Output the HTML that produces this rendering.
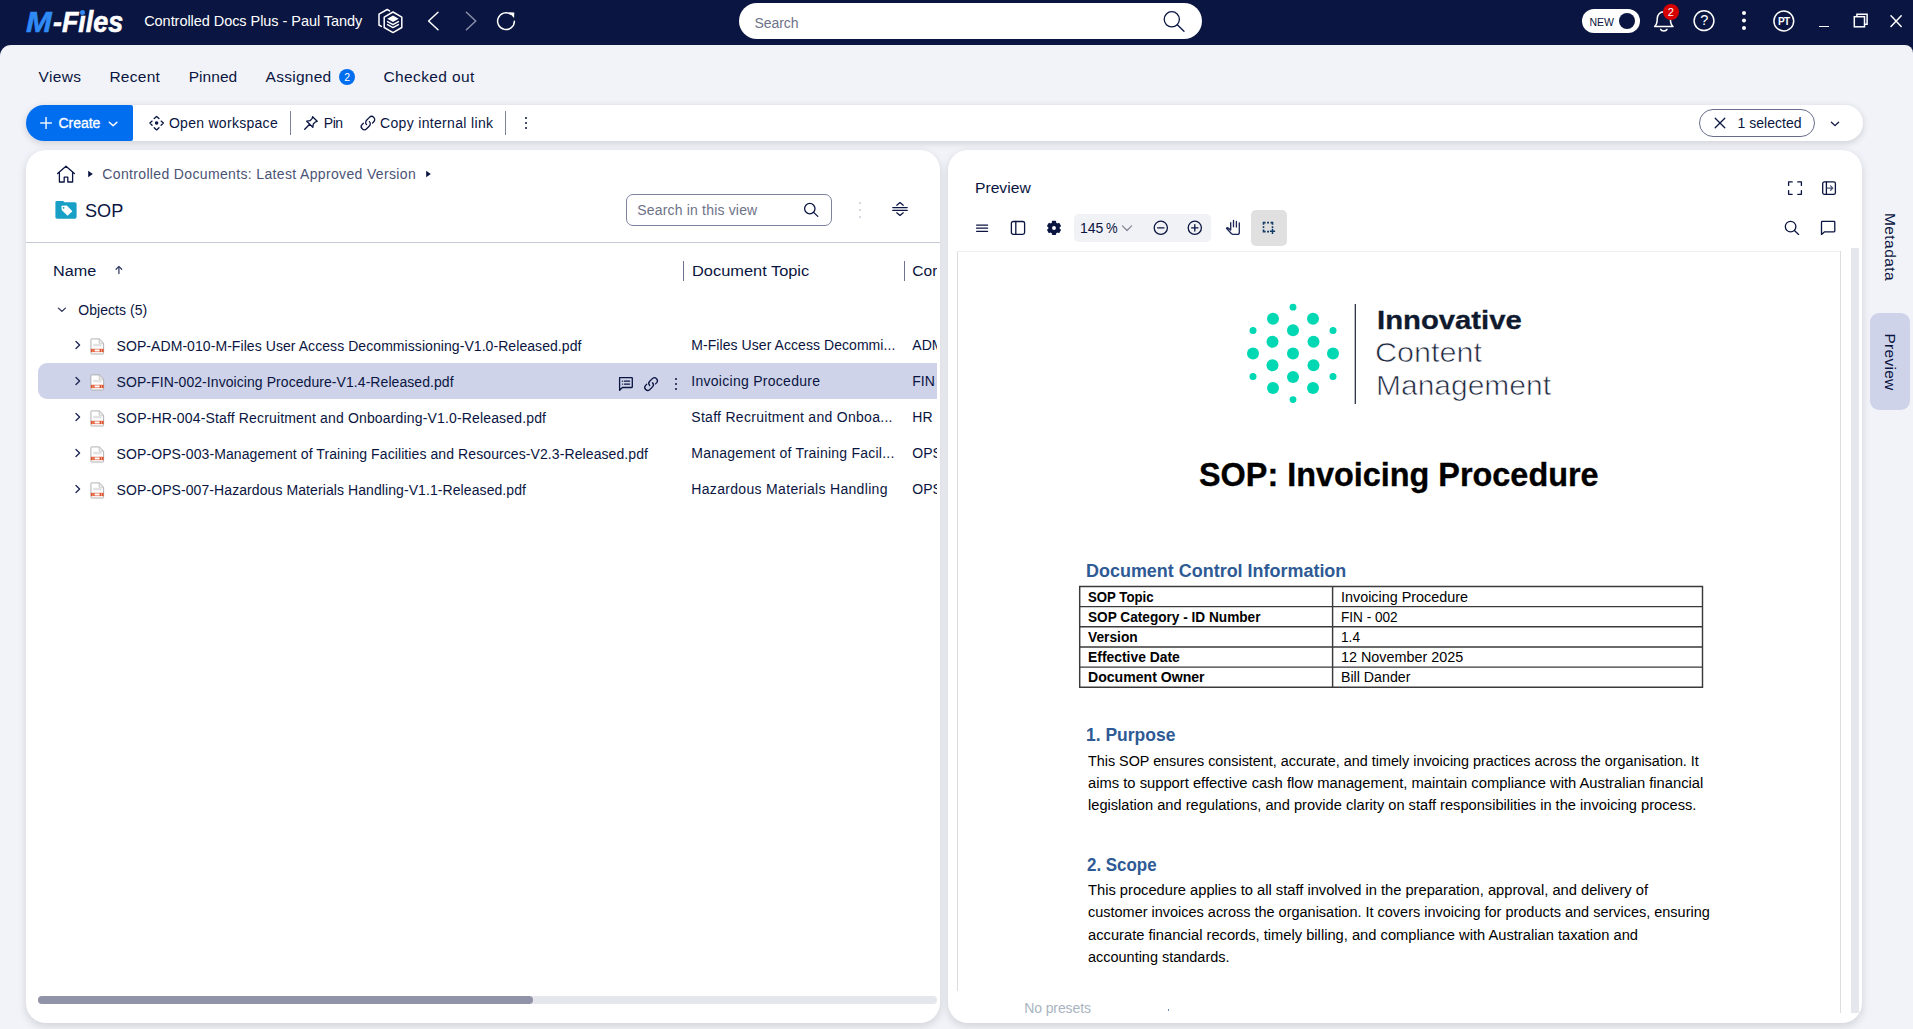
<!DOCTYPE html>
<html><head><meta charset="utf-8"><title>M-Files</title>
<style>
*{box-sizing:border-box;margin:0;padding:0}
html,body{width:1913px;height:1029px;overflow:hidden;background:#0a1541;font-family:"Liberation Sans",sans-serif;color:#0a1541}
.a{position:absolute}
.t{position:absolute;white-space:pre;line-height:1;transform-origin:0 50%}
#content{left:0;top:45px;width:1913px;height:984px;background:#f2f3f8;border-radius:11px 8px 0 0}
.panel{background:#fff;border-radius:20px;box-shadow:0 3px 9px rgba(20,22,40,.15)}
svg{position:absolute;overflow:visible}
.ic{fill:none;stroke:#0a1541;stroke-width:1.3;stroke-linecap:round;stroke-linejoin:round}
.icw{fill:none;stroke:#fff;stroke-width:1.5;stroke-linecap:round;stroke-linejoin:round}
</style></head><body>
<!-- TOP BAR -->
<div class="a" id="content"></div>
<!-- vault icon -->
<svg style="left:376px;top:7px" width="30" height="28" viewBox="376 7 30 28">
<path class="icw" stroke-width="1.4" d="M381.4 26.4 L379 25 V14.2 L387.2 9.5 L389.6 10.9"/>
<path class="icw" stroke-width="1.5" d="M393 12 L401.8 17.1 V27.5 L393 32.6 L384.2 27.5 V17.1 Z"/>
<path fill="#fff" d="M393 15.6 L398.7 18.8 L393 22 L387.3 18.8 Z"/>
<path class="icw" stroke-width="1.3" d="M387.6 21.6 L393 24.6 L398.4 21.6 M387.6 24.6 L393 27.6 L398.4 24.6"/>
</svg>
<!-- back / fwd / refresh -->
<svg style="left:424px;top:9px" width="20" height="24" viewBox="0 0 20 24"><path class="icw" stroke-width="1.6" d="M14 3.2 L4.6 12 L14 20.8"/></svg>
<svg style="left:461px;top:9px" width="20" height="24" viewBox="0 0 20 24"><path class="icw" style="stroke:#8a8fa9" stroke-width="1.6" d="M5.4 3.2 L14.8 12 L5.4 20.8"/></svg>
<svg style="left:494px;top:9px" width="24" height="24" viewBox="0 0 24 24"><path class="icw" stroke-width="1.6" d="M20.4 12.2 A8.4 8.4 0 1 1 16.6 5.1"/><path fill="#fff" d="M14.6 3.2 L20.3 3.4 L20.1 9.1 Z"/></svg>
<!-- search box -->
<div class="a" style="left:739px;top:3px;width:463px;height:36px;border-radius:18px;background:#fff"></div>
<svg style="left:1161px;top:9px" width="26" height="26" viewBox="0 0 26 26"><circle class="ic" stroke-width="1.6" cx="10.8" cy="10.3" r="7.6"/><path class="ic" stroke-width="1.8" d="M16.3 15.8 L23 22.3"/></svg>
<!-- NEW toggle -->
<div class="a" style="left:1582px;top:9px;width:58px;height:24px;border-radius:12px;background:#fff"></div>
<div class="a" style="left:1619px;top:13px;width:16px;height:16px;border-radius:8px;background:#0a1541"></div>
<!-- bell -->
<svg style="left:1652px;top:9px" width="24" height="24" viewBox="0 0 24 24"><path class="icw" stroke-width="1.5" d="M2.6 17.6 C5 15.6 5.2 13 5.2 10 C5.2 5.6 8 2.8 11.8 2.8 C15.6 2.8 18.4 5.6 18.4 10 C18.4 13 18.6 15.6 21 17.6 Z"/><path class="icw" stroke-width="1.5" d="M8.6 20.4 C9.6 22.4 14 22.4 15 20.4"/></svg>
<div class="a" style="left:1662.8px;top:4.2px;width:16px;height:16px;border-radius:8px;background:#d60000"></div>
<!-- help -->
<svg style="left:1692px;top:9px" width="24" height="24" viewBox="1692 9 24 24"><circle class="icw" stroke-width="1.5" cx="1704" cy="20.7" r="9.9"/></svg>
<!-- kebab -->
<div class="a" style="left:1741.6px;top:11.4px;width:4px;height:4px;border-radius:2px;background:#fff;box-shadow:0 7.5px 0 #fff,0 15px 0 #fff"></div>
<!-- PT -->
<svg style="left:1772px;top:9px" width="24" height="24" viewBox="1772 9 24 24"><circle class="icw" stroke-width="1.5" cx="1783.8" cy="21" r="9.9"/></svg>
<!-- window controls -->
<div class="a" style="left:1819.2px;top:26.3px;width:10px;height:1.2px;background:#fff"></div>
<svg style="left:1852px;top:12px" width="18" height="18" viewBox="0 0 18 18"><rect class="icw" style="stroke-linejoin:miter" stroke-width="1.2" x="2.3" y="4.7" width="10.2" height="10.1"/><path class="icw" style="stroke-linejoin:miter;stroke-linecap:butt" stroke-width="1.2" d="M4.9 4.7 V2.3 H15.1 V12.3 H12.5"/></svg>
<svg style="left:1889px;top:14px" width="14" height="14" viewBox="0 0 14 14"><path class="icw" stroke-width="1.2" d="M2 1.8 L12.2 12.4 M12.2 1.8 L2 12.4"/></svg>

<!-- TABS badge -->
<div class="a" style="left:339px;top:69.3px;width:16px;height:16px;border-radius:8px;background:#006eef"></div>

<!-- TOOLBAR -->
<div class="a" style="left:26px;top:105px;width:1837px;height:36px;border-radius:18px;background:#fff;box-shadow:0 2px 7px rgba(20,22,40,.16)"></div>
<div class="a" style="left:26px;top:105px;width:107px;height:36px;border-radius:18px 2px 2px 18px;background:#006eef"></div>
<svg style="left:39px;top:116px" width="14" height="14" viewBox="0 0 14 14"><path class="icw" stroke-width="1.25" style="stroke-linecap:butt;opacity:.92" d="M7.05 1 V12.9 M1.2 7 H12.9"/></svg>
<svg style="left:107px;top:120px" width="12" height="8" viewBox="0 0 12 8"><path class="icw" stroke-width="1.2" d="M2.3 2.2 L6.1 5.8 L9.9 2.2"/></svg>
<!-- open workspace icon -->
<svg style="left:148px;top:115px" width="17" height="17" viewBox="0 0 17 17"><circle cx="8.6" cy="8.1" r="1.75" fill="#0a1541"/><path class="ic" stroke-width="1.4" d="M6.2 3.6 L8.6 1.4 L11 3.6 M6.2 12.7 L8.6 14.9 L11 12.7 M4.1 6.1 L1.9 8.1 L4.1 10.2 M13.1 6.1 L15.4 8.1 L13.1 10.2"/></svg>
<div class="a" style="left:290px;top:111px;width:1px;height:24px;background:#7d8299"></div>
<!-- pin icon -->
<svg style="left:302px;top:114px" width="17" height="18" viewBox="0 0 17 18"><path class="ic" stroke-width="1.2" d="M10.6 2.7 L15.2 7.3 L13.4 7.9 L11.3 10 L10.8 13.3 L4.7 7.2 L8 6.7 L10.1 4.6 Z M7.7 10.3 L2.7 15.2"/></svg>
<!-- link icon -->
<svg style="left:359px;top:114px" width="18" height="18" viewBox="0 0 18 18"><path class="ic" stroke-width="1.25" d="M7.6 10.6 A3.1 3.1 0 0 1 7.6 6.2 L10.4 3.4 A3.1 3.1 0 0 1 14.8 7.8 L13.6 9"/><path class="ic" stroke-width="1.25" d="M10.4 7.6 A3.1 3.1 0 0 1 10.4 12 L7.6 14.8 A3.1 3.1 0 0 1 3.2 10.4 L4.4 9.2"/></svg>
<div class="a" style="left:505px;top:111px;width:1px;height:24px;background:#7d8299"></div>
<div class="a" style="left:524.6px;top:116.6px;width:2.8px;height:2.8px;border-radius:2px;background:#0a1541;box-shadow:0 5px 0 #0a1541,0 10px 0 #0a1541"></div>
<!-- 1 selected pill -->
<div class="a" style="left:1699px;top:109px;width:116px;height:28px;border-radius:14px;border:1px solid #686d8c;background:#fff"></div>
<svg style="left:1713px;top:116px" width="14" height="14" viewBox="0 0 14 14"><path class="ic" stroke-width="1.15" d="M2.2 2.2 L11.8 11.8 M11.8 2.2 L2.2 11.8"/></svg>
<svg style="left:1829px;top:120px" width="12" height="8" viewBox="0 0 12 8"><path class="ic" stroke-width="1.3" d="M2.4 2.2 L6 5.6 L9.6 2.2"/></svg>
<!-- LEFT PANEL -->
<div class="a panel" style="left:26px;top:150px;width:914px;height:873px"></div>
<!-- home -->
<svg style="left:56px;top:164px" width="20" height="20" viewBox="0 0 20 20"><path class="ic" stroke-width="1.5" stroke-linejoin="miter" d="M1.6 9.6 L10 2.2 L18.4 9.6 M3.4 8.4 V18 H8.2 V13.2 H11.8 V18 H16.6 V8.4"/></svg>
<svg style="left:87px;top:170px" width="8" height="8" viewBox="0 0 8 8"><path fill="#0a1541" d="M1.2 0.8 L5.8 4 L1.2 7.2 Z"/></svg>
<svg style="left:425px;top:170px" width="8" height="8" viewBox="0 0 8 8"><path fill="#0a1541" d="M1.2 0.8 L5.8 4 L1.2 7.2 Z"/></svg>
<!-- SOP folder-tag icon -->
<svg style="left:55px;top:200px" width="22" height="20" viewBox="0 0 22 20"><path fill="#189fc6" d="M0.4 2.4 Q0.4 1 1.8 1 H8.2 L9.4 2.2 H20 Q21.6 2.2 21.6 3.8 V17 Q21.6 18.8 19.8 18.8 H2.2 Q0.4 18.8 0.4 17 Z"/><path fill="#fff" d="M6.4 5.8 L11.8 5.4 L17.4 11.2 L12.6 15.8 L6.8 10.2 Z"/><circle cx="8.6" cy="7.8" r="0.9" fill="#189fc6"/></svg>
<!-- search-in-view box -->
<div class="a" style="left:626px;top:194px;width:206px;height:32px;border-radius:7px;border:1px solid #7d829d;background:#fff"></div>
<svg style="left:802px;top:201px" width="18" height="18" viewBox="0 0 18 18"><circle class="ic" stroke-width="1.4" cx="7.8" cy="7.6" r="5.2"/><path class="ic" stroke-width="1.5" d="M11.6 11.4 L15.8 15.4"/></svg>
<div class="a" style="left:858.5px;top:201.7px;width:2.8px;height:2.8px;border-radius:2px;background:#c9ccd8;box-shadow:0 7px 0 #c9ccd8,0 14px 0 #c9ccd8"></div>
<!-- collapse icon -->
<svg style="left:891px;top:200px" width="18" height="18" viewBox="0 0 18 18"><path class="ic" stroke-width="1.4" d="M1.8 7.6 H16.2 M1.8 10.4 H16.2 M5.8 5.2 L9 2.6 L12.2 5.2 M5.8 12.8 L9 15.4 L12.2 12.8"/></svg>
<!-- divider -->
<div class="a" style="left:26px;top:241.5px;width:914px;height:1px;background:#c6c9d6"></div>
<!-- header separators / sort arrow -->
<svg style="left:113px;top:263px" width="12" height="13" viewBox="0 0 12 13"><path class="ic" style="stroke:#3a4268" stroke-width="1.2" d="M5.9 10.6 V3.6 M3.1 6.2 L5.9 3.4 L8.7 6.2"/></svg>
<div class="a" style="left:683px;top:261px;width:1px;height:20px;background:#6d7290"></div>
<div class="a" style="left:904px;top:261px;width:1px;height:20px;background:#6d7290"></div>
<!-- Objects chevron -->
<svg style="left:56px;top:305px" width="12" height="10" viewBox="0 0 12 10"><path class="ic" style="stroke:#2a3258" stroke-width="1.15" d="M2.4 3.1 L5.9 6.4 L9.4 3.1"/></svg>
<!-- selected row -->
<div class="a" style="left:38px;top:363px;width:899px;height:36px;background:#ced3ea;border-radius:9px 0 0 9px"></div>
<!-- row action icons -->
<svg style="left:617px;top:375px" width="18" height="18" viewBox="0 0 18 18"><path class="ic" stroke-width="1.15" d="M2.6 2.7 H14.8 Q15.3 2.7 15.3 3.2 V12 Q15.3 12.5 14.8 12.5 H5.4 L2.6 15.2 Z"/><path class="ic" stroke-width="1.05" d="M5.4 6.2 H5.5 M7.4 6.2 H12.6 M5.4 9.1 H5.5 M7.4 9.1 H12.6"/></svg>
<svg style="left:642px;top:375px" width="18" height="18" viewBox="0 0 18 18"><path class="ic" stroke-width="1.15" d="M7.7 10.5 A3 3 0 0 1 7.7 6.3 L10.6 3.4 A3 3 0 0 1 14.8 7.6 L13.5 8.9"/><path class="ic" stroke-width="1.15" d="M10.5 7.7 A3 3 0 0 1 10.5 11.9 L7.6 14.8 A3 3 0 0 1 3.4 10.6 L4.7 9.3"/></svg>
<div class="a" style="left:674.6px;top:377.5px;width:2.7px;height:2.7px;border-radius:2px;background:#0a1541;box-shadow:0 5px 0 #0a1541,0 10px 0 #0a1541"></div>
<svg style="left:74px;top:340.2px" width="8" height="10" viewBox="0 0 8 10"><path class="ic" style="stroke:#1c2553" stroke-width="1.1" d="M2 1.5 L5.6 5 L2 8.5"/></svg>
<svg style="left:89.5px;top:337.5px" width="15" height="17" viewBox="0 0 15 17"><path fill="#fff" stroke="#a9a9a9" stroke-width="0.9" d="M1.6 0.9 H9.2 L13.6 5.2 V15.2 Q13.6 16 12.8 16 H1.6 Q0.9 16 0.9 15.2 V1.7 Q0.9 0.9 1.6 0.9 Z"/><path fill="#f4f4f4" stroke="#b5b5b5" stroke-width="0.7" d="M9.2 0.9 V5.2 H13.6 Z"/><rect x="3.2" y="5.8" width="8.4" height="2.6" fill="#e3e3e3"/><rect x="0.9" y="10.8" width="12.7" height="3.3" fill="#e0522b"/><rect x="4.6" y="11.4" width="5" height="2.1" fill="#fff"/><rect x="2.6" y="10.8" width="0.7" height="3.3" fill="#f6b7a3"/><rect x="11.2" y="10.8" width="0.7" height="3.3" fill="#f6b7a3"/></svg>
<svg style="left:74px;top:376.2px" width="8" height="10" viewBox="0 0 8 10"><path class="ic" style="stroke:#1c2553" stroke-width="1.1" d="M2 1.5 L5.6 5 L2 8.5"/></svg>
<svg style="left:89.5px;top:373.5px" width="15" height="17" viewBox="0 0 15 17"><path fill="#fff" stroke="#a9a9a9" stroke-width="0.9" d="M1.6 0.9 H9.2 L13.6 5.2 V15.2 Q13.6 16 12.8 16 H1.6 Q0.9 16 0.9 15.2 V1.7 Q0.9 0.9 1.6 0.9 Z"/><path fill="#f4f4f4" stroke="#b5b5b5" stroke-width="0.7" d="M9.2 0.9 V5.2 H13.6 Z"/><rect x="3.2" y="5.8" width="8.4" height="2.6" fill="#e3e3e3"/><rect x="0.9" y="10.8" width="12.7" height="3.3" fill="#e0522b"/><rect x="4.6" y="11.4" width="5" height="2.1" fill="#fff"/><rect x="2.6" y="10.8" width="0.7" height="3.3" fill="#f6b7a3"/><rect x="11.2" y="10.8" width="0.7" height="3.3" fill="#f6b7a3"/></svg>
<svg style="left:74px;top:412.2px" width="8" height="10" viewBox="0 0 8 10"><path class="ic" style="stroke:#1c2553" stroke-width="1.1" d="M2 1.5 L5.6 5 L2 8.5"/></svg>
<svg style="left:89.5px;top:409.5px" width="15" height="17" viewBox="0 0 15 17"><path fill="#fff" stroke="#a9a9a9" stroke-width="0.9" d="M1.6 0.9 H9.2 L13.6 5.2 V15.2 Q13.6 16 12.8 16 H1.6 Q0.9 16 0.9 15.2 V1.7 Q0.9 0.9 1.6 0.9 Z"/><path fill="#f4f4f4" stroke="#b5b5b5" stroke-width="0.7" d="M9.2 0.9 V5.2 H13.6 Z"/><rect x="3.2" y="5.8" width="8.4" height="2.6" fill="#e3e3e3"/><rect x="0.9" y="10.8" width="12.7" height="3.3" fill="#e0522b"/><rect x="4.6" y="11.4" width="5" height="2.1" fill="#fff"/><rect x="2.6" y="10.8" width="0.7" height="3.3" fill="#f6b7a3"/><rect x="11.2" y="10.8" width="0.7" height="3.3" fill="#f6b7a3"/></svg>
<svg style="left:74px;top:448.2px" width="8" height="10" viewBox="0 0 8 10"><path class="ic" style="stroke:#1c2553" stroke-width="1.1" d="M2 1.5 L5.6 5 L2 8.5"/></svg>
<svg style="left:89.5px;top:445.5px" width="15" height="17" viewBox="0 0 15 17"><path fill="#fff" stroke="#a9a9a9" stroke-width="0.9" d="M1.6 0.9 H9.2 L13.6 5.2 V15.2 Q13.6 16 12.8 16 H1.6 Q0.9 16 0.9 15.2 V1.7 Q0.9 0.9 1.6 0.9 Z"/><path fill="#f4f4f4" stroke="#b5b5b5" stroke-width="0.7" d="M9.2 0.9 V5.2 H13.6 Z"/><rect x="3.2" y="5.8" width="8.4" height="2.6" fill="#e3e3e3"/><rect x="0.9" y="10.8" width="12.7" height="3.3" fill="#e0522b"/><rect x="4.6" y="11.4" width="5" height="2.1" fill="#fff"/><rect x="2.6" y="10.8" width="0.7" height="3.3" fill="#f6b7a3"/><rect x="11.2" y="10.8" width="0.7" height="3.3" fill="#f6b7a3"/></svg>
<svg style="left:74px;top:484.2px" width="8" height="10" viewBox="0 0 8 10"><path class="ic" style="stroke:#1c2553" stroke-width="1.1" d="M2 1.5 L5.6 5 L2 8.5"/></svg>
<svg style="left:89.5px;top:481.5px" width="15" height="17" viewBox="0 0 15 17"><path fill="#fff" stroke="#a9a9a9" stroke-width="0.9" d="M1.6 0.9 H9.2 L13.6 5.2 V15.2 Q13.6 16 12.8 16 H1.6 Q0.9 16 0.9 15.2 V1.7 Q0.9 0.9 1.6 0.9 Z"/><path fill="#f4f4f4" stroke="#b5b5b5" stroke-width="0.7" d="M9.2 0.9 V5.2 H13.6 Z"/><rect x="3.2" y="5.8" width="8.4" height="2.6" fill="#e3e3e3"/><rect x="0.9" y="10.8" width="12.7" height="3.3" fill="#e0522b"/><rect x="4.6" y="11.4" width="5" height="2.1" fill="#fff"/><rect x="2.6" y="10.8" width="0.7" height="3.3" fill="#f6b7a3"/><rect x="11.2" y="10.8" width="0.7" height="3.3" fill="#f6b7a3"/></svg>

<!-- h scrollbar -->
<div class="a" style="left:38px;top:996px;width:899px;height:8px;border-radius:4px;background:#e6e7ed"></div>
<div class="a" style="left:38px;top:996px;width:495px;height:8px;border-radius:4px;background:#9194a9"></div>
<!-- RIGHT PANEL -->
<div class="a panel" style="left:948px;top:150px;width:914px;height:873px"></div>
<!-- header icons -->
<svg style="left:1786px;top:179px" width="18" height="18" viewBox="0 0 18 18"><path class="ic" stroke-width="1.15" stroke-linejoin="miter" stroke-linecap="butt" d="M2.6 6.4 V2.9 H6.2 M11.8 2.9 H15.4 V6.4 M15.4 11.6 V15.3 H11.8 M6.2 15.3 H2.6 V11.6"/></svg>
<svg style="left:1820px;top:179px" width="18" height="18" viewBox="0 0 18 18"><rect class="ic" stroke-width="1.15" x="2.7" y="2.9" width="12.7" height="12.4" rx="1.6"/><path class="ic" stroke-width="1.15" d="M6.4 2.9 V15.3"/><path class="ic" style="stroke:#4a5173" stroke-width="1.15" d="M7.4 9.1 H12.4 M10.6 6.9 L12.8 9.1 L10.6 11.3"/></svg>
<svg style="left:1782px;top:218px" width="20" height="20" viewBox="0 0 20 20"><circle class="ic" stroke-width="1.15" cx="8.6" cy="8.6" r="5.3"/><path class="ic" stroke-width="1.25" d="M12.4 12.6 L16.6 16.4"/></svg>
<svg style="left:1819px;top:218px" width="20" height="20" viewBox="0 0 20 20"><path class="ic" stroke-width="1.15" d="M3.2 3.4 H15 Q15.8 3.4 15.8 4.2 V13 Q15.8 13.8 15 13.8 H5.6 L2.5 16.4 V4.2 Q2.5 3.4 3.2 3.4 Z"/></svg>
<!-- pdf toolbar -->
<svg style="left:974px;top:221px" width="16" height="14" viewBox="0 0 16 14"><path class="ic" stroke-width="1.1" d="M2.6 4.1 H13.6 M2.6 7.2 H13.6 M2.6 10.3 H13.6"/></svg>
<svg style="left:1009px;top:219px" width="18" height="18" viewBox="0 0 18 18"><rect class="ic" stroke-width="1.15" x="2.4" y="2.5" width="13.2" height="12.8" rx="1.8"/><path class="ic" stroke-width="1.15" d="M6.8 2.5 V15.3"/></svg>
<!-- gear -->
<svg style="left:1045px;top:219px" width="18" height="18" viewBox="0 0 18 18"><g transform="translate(9 8.95)" fill="#0a1541"><circle r="5.7"/><g id="gt"><rect x="-2.15" y="-7.1" width="4.3" height="14.2" rx="0.8"/></g><use href="#gt" transform="rotate(60)"/><use href="#gt" transform="rotate(120)"/><circle r="1.95" fill="#fff"/></g></svg>
<div class="a" style="left:1074px;top:214px;width:137px;height:28px;border-radius:5px;background:#f1f2f6"></div>
<svg style="left:1120px;top:223px" width="14" height="10" viewBox="0 0 14 10"><path class="ic" style="stroke:#858a97" stroke-width="1.7" d="M2.4 2.9 L7 7.5 L11.6 2.9"/></svg>
<svg style="left:1152px;top:219px" width="18" height="18" viewBox="0 0 18 18"><circle class="ic" stroke-width="1.2" cx="8.8" cy="8.8" r="6.6"/><path class="ic" stroke-width="1.3" d="M5.6 8.8 H12"/></svg>
<svg style="left:1186px;top:219px" width="18" height="18" viewBox="0 0 18 18"><circle class="ic" stroke-width="1.2" cx="8.8" cy="8.8" r="6.6"/><path class="ic" stroke-width="1.3" d="M5.6 8.8 H12 M8.8 5.6 V12"/></svg>
<!-- hand -->
<svg style="left:1222px;top:216px" width="22" height="22" viewBox="1222 216 22 22"><path class="ic" style="stroke:#1c2553" stroke-width="1.15" d="M1230.7 222.6 V229.9 M1233.5 220.3 V226.8 M1236.4 221.3 V227 M1239.3 222.8 V232.4 Q1239.3 234.4 1237.3 234.4 H1233 Q1232.1 234.4 1231.5 233.7 L1226.5 228.3 Q1227.2 227.3 1228.2 228 L1230.6 230"/></svg>
<div class="a" style="left:1251px;top:210px;width:36px;height:36px;border-radius:5px;background:#e0e0e0"></div>
<svg style="left:1258px;top:217px" width="22" height="22" viewBox="1258 217 22 22"><path fill="none" stroke="#123a66" stroke-width="1.6" stroke-linejoin="miter" d="M1263.5 224.7 V222.6 H1265.6 M1267.1 222.6 H1269 M1270.5 222.6 H1272.5 V224.7 M1272.5 226.2 V228 M1263.5 226.2 V228 M1263.5 229.5 V231.6 H1265.6 M1267.1 231.6 H1269"/><path fill="none" stroke="#123a66" stroke-width="1.5" d="M1269.9 231.3 H1275.1 M1272.5 228.7 V233.9"/></svg>
<!-- pdf viewport -->
<div class="a" style="left:957px;top:251px;width:884px;height:740px;background:#fff;border-left:1px solid #dcdcde;border-top:1px solid #eeeeef"></div>
<div class="a" style="left:1840px;top:251px;width:1px;height:762px;background:#dddde0"></div>
<div class="a" style="left:1851px;top:248px;width:8px;height:765px;background:#e6e7ed"></div>
<!-- LOGO -->
<svg style="left:1240px;top:295px" width="330" height="120" viewBox="1240 295 330 120">
<g fill="#00d8b3">
<circle cx="1293" cy="307.2" r="3.4"/><circle cx="1293" cy="399.6" r="3.4"/>
<circle cx="1253" cy="330.4" r="3.5"/><circle cx="1333" cy="330.4" r="3.5"/>
<circle cx="1253" cy="376.6" r="3.5"/><circle cx="1333" cy="376.6" r="3.5"/>
<circle cx="1273" cy="318.8" r="6"/><circle cx="1313" cy="318.8" r="6"/>
<circle cx="1293" cy="330.2" r="6"/>
<circle cx="1272.5" cy="341.8" r="6"/><circle cx="1313.5" cy="341.8" r="6"/>
<circle cx="1253" cy="353.4" r="6"/><circle cx="1293" cy="353.4" r="6"/><circle cx="1333" cy="353.4" r="6"/>
<circle cx="1272.5" cy="365.2" r="6"/><circle cx="1313.5" cy="365.2" r="6"/>
<circle cx="1293" cy="377" r="6"/>
<circle cx="1273" cy="388" r="6"/><circle cx="1313" cy="388" r="6"/>
</g>
<rect x="1354.7" y="304" width="1.2" height="100" fill="#1c2438"/>
</svg>
<!-- TABLE -->
<svg style="left:1070px;top:580px" width="640" height="115" viewBox="1070 580 640 115"><path fill="none" stroke="#3a3a3a" stroke-width="1.45" d="M1079.7 586.4 H1702.5 V687.2 H1079.7 Z M1332.6 586.4 V687.2 M1079.7 606.6 H1702.5 M1079.7 626.8 H1702.5 M1079.7 646.9 H1702.5 M1079.7 667.1 H1702.5"/></svg>
<!-- tiny dot -->
<div class="a" style="left:1167.5px;top:1009px;width:1px;height:2px;background:#6c84b8"></div>
<!-- right side tab -->
<div class="a" style="left:1870px;top:313px;width:40px;height:97px;border-radius:9px;background:#ced3ea"></div>
<!-- TEXTS -->
<div class="t" style="left:26.1px;top:7px;font-size:30px;color:#2f8af5;font-weight:700;font-style:italic;transform:scaleX(1.0280);-webkit-text-stroke:0.6px #2f8af5;">M</div>
<div class="t" style="left:53.0px;top:7px;font-size:30px;color:#fff;font-weight:700;font-style:italic;transform:scaleX(0.8959);-webkit-text-stroke:0.6px #fff;">-Fıles</div>
<div class="t" style="left:144.2px;top:14px;font-size:14.5px;color:#fff;letter-spacing:-0.052px;">Controlled Docs Plus - Paul Tandy</div>
<div class="t" style="left:754.4px;top:16px;font-size:14px;color:#6d7288;letter-spacing:-0.032px;">Search</div>
<div class="t" style="left:1589.4px;top:17px;font-size:10.5px;color:#0a1541;letter-spacing:0.000px;">NEW</div>
<div class="t" style="left:1667.7px;top:7px;font-size:11px;color:#fff;letter-spacing:-0.225px;">2</div>
<div class="t" style="left:1700.3px;top:13px;font-size:14.5px;color:#fff;letter-spacing:-1.578px;">?</div>
<div class="t" style="left:1778.0px;top:17px;font-size:10px;color:#fff;font-weight:700;letter-spacing:-0.581px;">PT</div>
<div class="t" style="left:38.5px;top:69px;font-size:15.5px;color:#0a1541;letter-spacing:0.355px;">Views</div>
<div class="t" style="left:109.4px;top:69px;font-size:15.5px;color:#0a1541;letter-spacing:0.275px;">Recent</div>
<div class="t" style="left:188.7px;top:69px;font-size:15.5px;color:#0a1541;letter-spacing:0.047px;">Pinned</div>
<div class="t" style="left:265.6px;top:69px;font-size:15.5px;color:#0a1541;letter-spacing:0.262px;">Assigned</div>
<div class="t" style="left:383.4px;top:69px;font-size:15.5px;color:#0a1541;letter-spacing:0.397px;">Checked out</div>
<div class="t" style="left:344.2px;top:72px;font-size:10.5px;color:#fff;letter-spacing:-0.244px;">2</div>
<div class="t" style="left:58.5px;top:116px;font-size:14px;color:#fff;letter-spacing:-0.026px;-webkit-text-stroke:0.3px #fff;">Create</div>
<div class="t" style="left:168.9px;top:116px;font-size:14px;color:#0a1541;letter-spacing:0.287px;">Open workspace</div>
<div class="t" style="left:323.8px;top:116px;font-size:14px;color:#0a1541;letter-spacing:-0.467px;">Pin</div>
<div class="t" style="left:380.0px;top:116px;font-size:14px;color:#0a1541;letter-spacing:0.330px;">Copy internal link</div>
<div class="t" style="left:1737.4px;top:116px;font-size:14px;color:#0a1541;letter-spacing:0.041px;">1 selected</div>
<div class="t" style="left:102.3px;top:167px;font-size:14px;color:#4b5375;letter-spacing:0.349px;">Controlled Documents: Latest Approved Version</div>
<div class="t" style="left:84.8px;top:201px;font-size:19.2px;color:#0a1541;transform:scaleX(0.9449);">SOP</div>
<div class="t" style="left:637.3px;top:203px;font-size:14px;color:#6d7288;letter-spacing:0.177px;">Search in this view</div>
<div class="t" style="left:53.4px;top:263px;font-size:15.5px;color:#0a1541;transform:scaleX(1.0445);">Name</div>
<div class="t" style="left:691.5px;top:263px;font-size:15.5px;color:#0a1541;transform:scaleX(1.0572);">Document Topic</div>
<div class="t" style="left:78.2px;top:303px;font-size:14px;color:#0a1541;letter-spacing:0.053px;">Objects (5)</div>
<div class="t" style="left:116.6px;top:339px;font-size:14px;color:#0a1541;letter-spacing:0.066px;">SOP-ADM-010-M-Files User Access Decommissioning-V1.0-Released.pdf</div>
<div class="t" style="left:691.3px;top:338px;font-size:14px;color:#0a1541;letter-spacing:0.060px;">M-Files User Access Decommi...</div>
<div class="t" style="left:912.2px;top:338px;font-size:14px;color:#0a1541;letter-spacing:0.1px;width:24.8px;overflow:hidden;">ADM</div>
<div class="t" style="left:116.6px;top:375px;font-size:14px;color:#0a1541;letter-spacing:0.066px;">SOP-FIN-002-Invoicing Procedure-V1.4-Released.pdf</div>
<div class="t" style="left:691.3px;top:374px;font-size:14px;color:#0a1541;letter-spacing:0.275px;">Invoicing Procedure</div>
<div class="t" style="left:912.2px;top:374px;font-size:14px;color:#0a1541;letter-spacing:0.1px;width:24.8px;overflow:hidden;">FIN</div>
<div class="t" style="left:116.6px;top:411px;font-size:14px;color:#0a1541;letter-spacing:0.157px;">SOP-HR-004-Staff Recruitment and Onboarding-V1.0-Released.pdf</div>
<div class="t" style="left:691.3px;top:410px;font-size:14px;color:#0a1541;letter-spacing:0.291px;">Staff Recruitment and Onboa...</div>
<div class="t" style="left:912.2px;top:410px;font-size:14px;color:#0a1541;letter-spacing:0.1px;width:24.8px;overflow:hidden;">HR</div>
<div class="t" style="left:116.6px;top:447px;font-size:14px;color:#0a1541;letter-spacing:0.091px;">SOP-OPS-003-Management of Training Facilities and Resources-V2.3-Released.pdf</div>
<div class="t" style="left:691.3px;top:446px;font-size:14px;color:#0a1541;letter-spacing:0.230px;">Management of Training Facil...</div>
<div class="t" style="left:912.2px;top:446px;font-size:14px;color:#0a1541;letter-spacing:0.1px;width:24.8px;overflow:hidden;">OPS</div>
<div class="t" style="left:116.6px;top:483px;font-size:14px;color:#0a1541;letter-spacing:0.083px;">SOP-OPS-007-Hazardous Materials Handling-V1.1-Released.pdf</div>
<div class="t" style="left:691.3px;top:482px;font-size:14px;color:#0a1541;letter-spacing:0.320px;">Hazardous Materials Handling</div>
<div class="t" style="left:912.2px;top:482px;font-size:14px;color:#0a1541;letter-spacing:0.1px;width:24.8px;overflow:hidden;">OPS</div>
<div class="t" style="left:912.3px;top:263px;font-size:15.5px;color:#0a1541;letter-spacing:0.1px;width:24.7px;overflow:hidden;">Corp</div>
<div class="t" style="left:975.3px;top:180px;font-size:15.5px;color:#0a1541;transform:scaleX(1.0101);">Preview</div>
<div class="t" style="left:1079.9px;top:221px;font-size:14px;color:#0a1541;letter-spacing:0.020px;">145</div>
<div class="t" style="left:1105.6px;top:221px;font-size:14px;color:#0a1541;transform:scaleX(0.9315);">%</div>
<div class="t" style="left:1024.2px;top:1001px;font-size:14px;color:#a9b4c1;letter-spacing:-0.100px;">No presets</div>
<div class="t" style="left:1377.2px;top:307px;font-size:26.2px;color:#0f1a2e;font-weight:700;transform:scaleX(1.1179);-webkit-text-stroke:0.3px #0f1a2e;">Innovative</div>
<div class="t" style="left:1375.4px;top:339px;font-size:27.6px;color:#1f2940;transform:scaleX(1.1070);-webkit-text-stroke:0.65px #fff;">Content</div>
<div class="t" style="left:1376.0px;top:372px;font-size:27.6px;color:#1f2940;transform:scaleX(1.0865);-webkit-text-stroke:0.65px #fff;">Management</div>
<div class="t" style="left:1198.6px;top:458px;font-size:33.5px;color:#000;font-weight:700;transform:scaleX(0.9669);-webkit-text-stroke:0.35px #000;">SOP: Invoicing Procedure</div>
<div class="t" style="left:1086.3px;top:562px;font-size:18px;color:#2e5a95;font-weight:700;transform:scaleX(0.9974);">Document Control Information</div>
<div class="t" style="left:1087.6px;top:590px;font-size:14px;color:#000;font-weight:700;transform:scaleX(0.9439);">SOP Topic</div>
<div class="t" style="left:1341.2px;top:590px;font-size:14px;color:#000;transform:scaleX(1.0263);">Invoicing Procedure</div>
<div class="t" style="left:1087.6px;top:610px;font-size:14px;color:#000;font-weight:700;transform:scaleX(0.9739);">SOP Category - ID Number</div>
<div class="t" style="left:1341.2px;top:610px;font-size:14px;color:#000;transform:scaleX(0.9699);">FIN - 002</div>
<div class="t" style="left:1087.6px;top:630px;font-size:14px;color:#000;font-weight:700;transform:scaleX(0.9823);">Version</div>
<div class="t" style="left:1341.2px;top:630px;font-size:14px;color:#000;transform:scaleX(0.9759);">1.4</div>
<div class="t" style="left:1087.6px;top:650px;font-size:14px;color:#000;font-weight:700;transform:scaleX(0.9914);">Effective Date</div>
<div class="t" style="left:1341.2px;top:650px;font-size:14px;color:#000;transform:scaleX(1.0262);">12 November 2025</div>
<div class="t" style="left:1087.6px;top:670px;font-size:14px;color:#000;font-weight:700;transform:scaleX(1.0060);">Document Owner</div>
<div class="t" style="left:1341.2px;top:670px;font-size:14px;color:#000;transform:scaleX(1.0134);">Bill Dander</div>
<div class="t" style="left:1086.4px;top:726px;font-size:18px;color:#2e5a95;font-weight:700;transform:scaleX(0.9714);">1. Purpose</div>
<div class="t" style="left:1087.6px;top:754px;font-size:14px;color:#000;transform:scaleX(1.0252);">This SOP ensures consistent, accurate, and timely invoicing practices across the organisation. It</div>
<div class="t" style="left:1087.6px;top:776px;font-size:14px;color:#000;transform:scaleX(1.0533);">aims to support effective cash flow management, maintain compliance with Australian financial</div>
<div class="t" style="left:1087.6px;top:798px;font-size:14px;color:#000;transform:scaleX(1.0456);">legislation and regulations, and provide clarity on staff responsibilities in the invoicing process.</div>
<div class="t" style="left:1087.2px;top:856px;font-size:18px;color:#2e5a95;font-weight:700;transform:scaleX(0.9401);">2. Scope</div>
<div class="t" style="left:1087.6px;top:883px;font-size:14px;color:#000;transform:scaleX(1.0494);">This procedure applies to all staff involved in the preparation, approval, and delivery of</div>
<div class="t" style="left:1087.6px;top:905px;font-size:14px;color:#000;transform:scaleX(1.0337);">customer invoices across the organisation. It covers invoicing for products and services, ensuring</div>
<div class="t" style="left:1087.6px;top:928px;font-size:14px;color:#000;transform:scaleX(1.0502);">accurate financial records, timely billing, and compliance with Australian taxation and</div>
<div class="t" style="left:1087.6px;top:950px;font-size:14px;color:#000;transform:scaleX(1.0330);">accounting standards.</div>
<div class="t" style="left:1889.5px;top:247px;font-size:15.5px;color:#0a1541;letter-spacing:0.45px;transform-origin:50% 50%;transform:translate(-50%,-50%) rotate(90deg)">Metadata</div>
<div class="t" style="left:1890px;top:362.4px;font-size:15.5px;color:#0a1541;letter-spacing:0.3px;transform-origin:50% 50%;transform:translate(-50%,-50%) rotate(90deg)">Preview</div>
<div class="a" style="left:79.6px;top:9.5px;width:5px;height:5px;border-radius:3px;background:#2f8af5"></div>
</body></html>
